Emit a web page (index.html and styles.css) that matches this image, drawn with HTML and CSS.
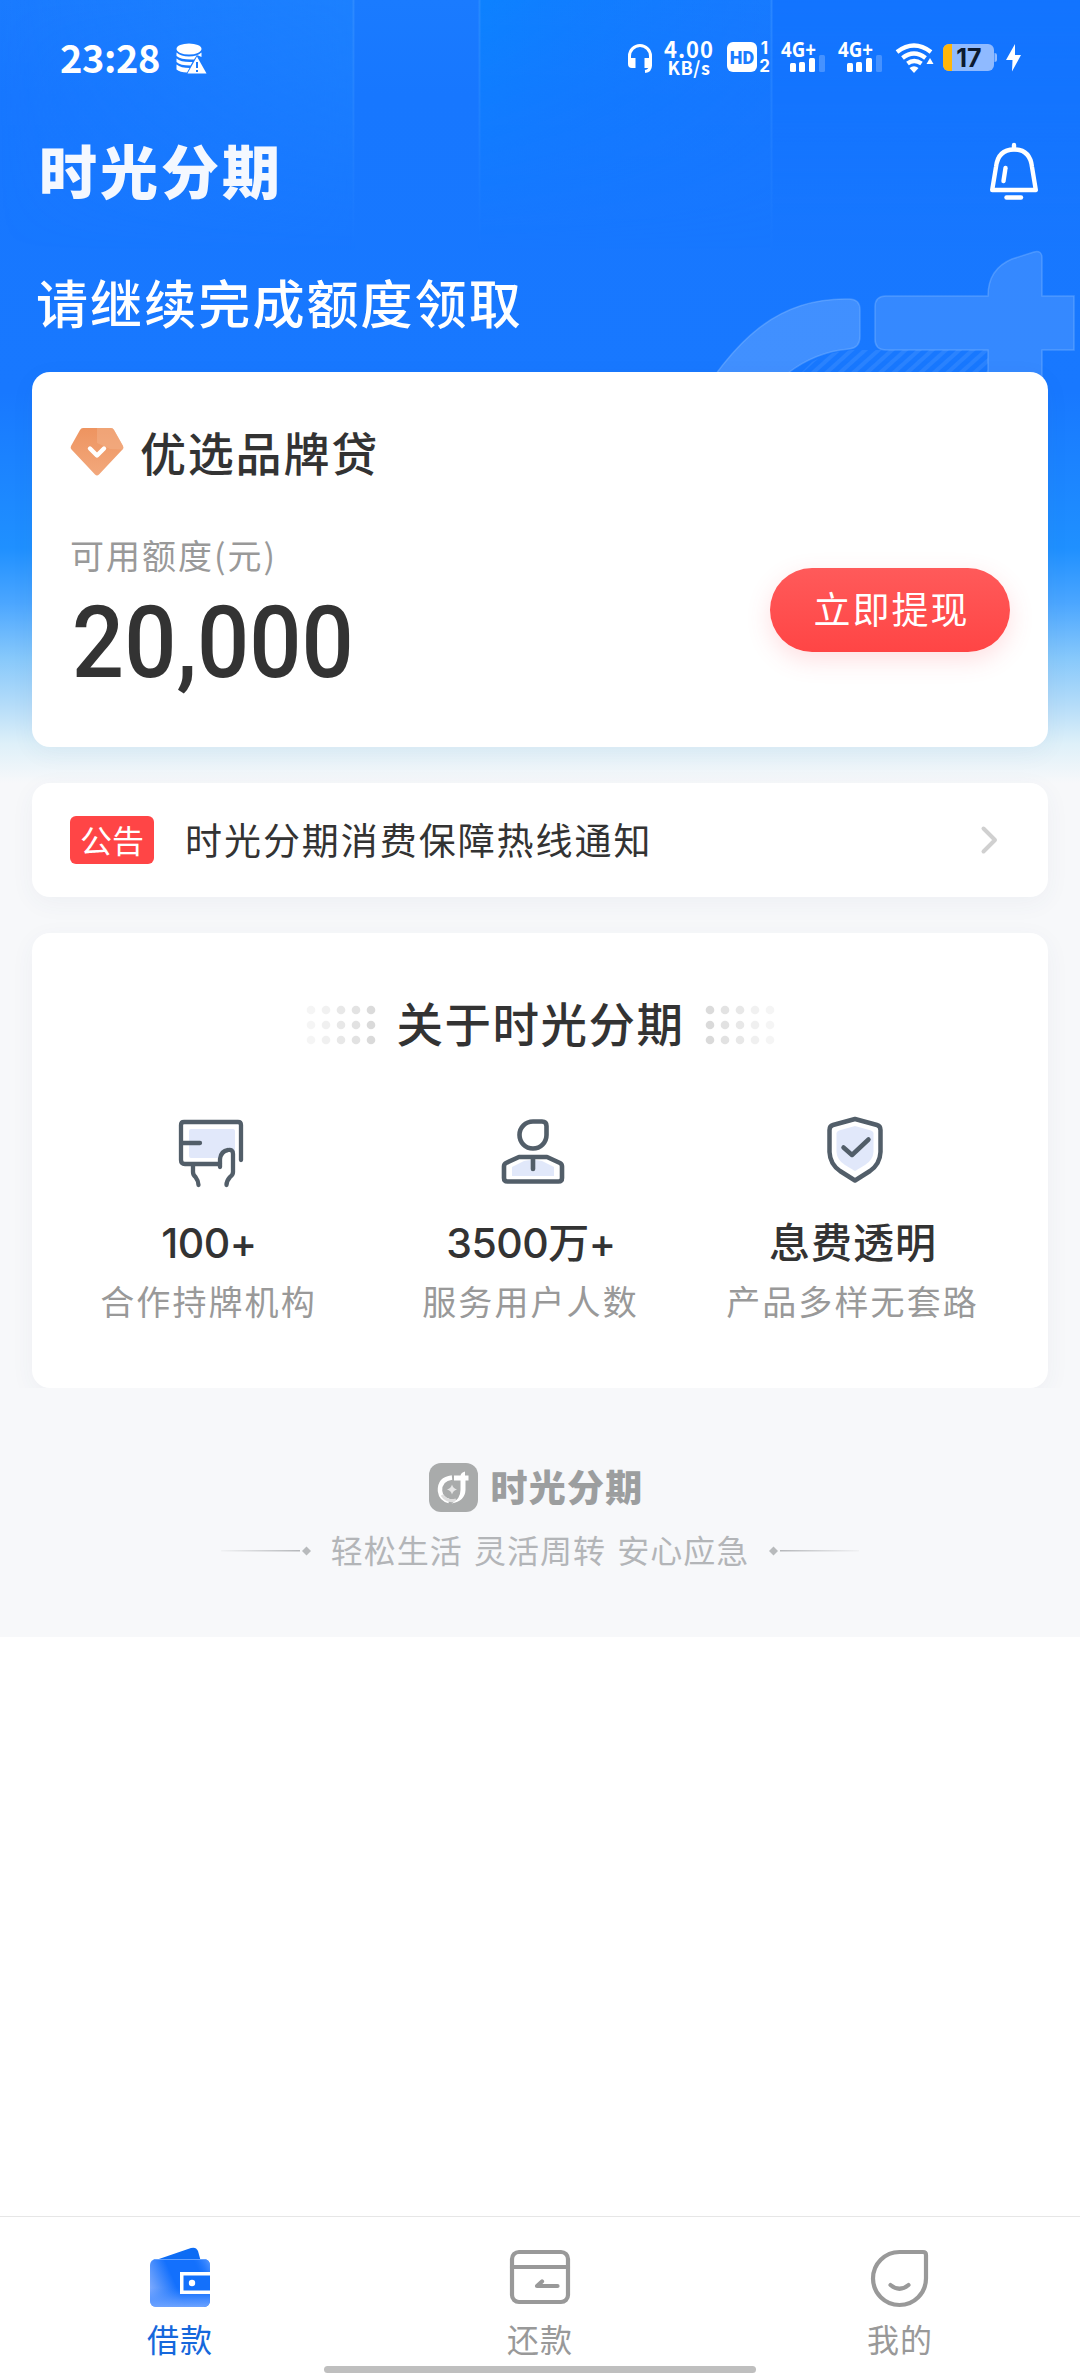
FILE: index.html
```html
<!DOCTYPE html>
<html lang="zh-CN">
<head>
<meta charset="utf-8">
<title>时光分期</title>
<link rel="stylesheet" href="styles.css">
</head>
<body>
<div class="app">
  <svg class="hero-art" viewBox="0 0 1080 783" aria-hidden="true">
    <defs>
      <linearGradient id="sky" x1="0" y1="0" x2="0" y2="1">
        <stop offset="0" stop-color="#1a7bff"/>
        <stop offset=".12" stop-color="#1777ff"/>
        <stop offset=".5" stop-color="#1878ff"/>
        <stop offset=".7" stop-color="#1f90ff"/>
        <stop offset=".77" stop-color="#4ba6ff"/>
        <stop offset=".84" stop-color="#86c8fb"/>
        <stop offset=".9" stop-color="#b4dcf9"/>
        <stop offset=".95" stop-color="#def0f9"/>
        <stop offset="1" stop-color="#f7f8fa"/>
      </linearGradient>
      <linearGradient id="beam" x1="0" y1="0" x2="1" y2="0">
        <stop offset="0" stop-color="#0784ff" stop-opacity=".7"/>
        <stop offset="1" stop-color="#0c78ff" stop-opacity=".2"/>
      </linearGradient>
      <linearGradient id="fade" x1="0" y1="0" x2="0" y2="1">
        <stop offset="0" stop-color="#fff"/>
        <stop offset="1" stop-color="#000"/>
      </linearGradient>
      <mask id="fadeMask"><rect width="1080" height="250" fill="url(#fade)"/></mask>
      <pattern id="hatch" width="9" height="9" patternUnits="userSpaceOnUse" patternTransform="rotate(48)">
        <rect width="4" height="9" fill="#fff" fill-opacity=".08"/>
      </pattern>
      <linearGradient id="edge" x1="0" y1="0" x2="1" y2="0">
        <stop offset="0" stop-color="#1c80ff" stop-opacity="0"/>
        <stop offset="1" stop-color="#1c80ff"/>
      </linearGradient>
    </defs>
    <rect width="1080" height="783" fill="url(#sky)"/>
    <g mask="url(#fadeMask)">
      <rect width="354" height="250" fill="url(#edge)"/>
      <rect x="479" width="293" height="250" fill="url(#beam)"/>
      <rect x="772" width="308" height="250" fill="#0d6fff" fill-opacity=".6"/>
      <path d="M353.500 0V250M479.500 0V250M771.500 0V250" stroke="#3d93ff" stroke-width="2" stroke-opacity=".5"/>
    </g>
    <path d="M800 374L812 362Q830 351 852 350H988V374Z" fill="url(#hatch)"/>
    <g fill="#fff" stroke="#8bc0ff" stroke-opacity=".35" stroke-width="1.500">
      <path fill-opacity=".18" d="M686 420C735 335 780 299 845 299H849Q860 299 860 310V336Q860 348 849 349C825 351 805 360 788 373L760 420Z"/>
      <path fill-opacity=".13" d="M886 296H988C988 274 1000 264 1012 259L1034 252Q1042 250 1042 258V296H1074V350H1042V420H988V350H886Q875 350 875 339V307Q875 296 886 296Z"/>
    </g>
  </svg>

  <div class="status-bar">
    <div class="status-left">
      <span class="clock">23:28</span>
      <svg width="31" height="31" viewBox="0 0 31 31" aria-hidden="true">
        <g fill="#fff">
          <ellipse cx="13" cy="6" rx="12.500" ry="5.500"/>
          <path d="M.500 9.500Q5 13.500 13 13.500T25.500 9.500V14L21 12L18 16.500Q5 17 .500 13Z"/>
          <path d="M.500 15.500Q5 19.500 16.500 19L14.500 22.500Q4 22.500 .500 19Z"/>
          <path d="M.500 21.500Q5 25 13.500 25L11 29.500Q4 29.500 .500 26.500Z"/>
          <path d="M21 13.500L30.500 30.500H11.500Z"/>
        </g>
        <path d="M21 19V25M21 27V29" stroke="#1a7bff" stroke-width="2"/>
      </svg>
    </div>
    <div class="status-right">
      <svg class="st-head" width="26" height="31" viewBox="0 0 26 31" aria-hidden="true">
        <path d="M2.500 19V13A10.500 10.500 0 0 1 23.500 13V22Q23.500 28 18 28.500" fill="none" stroke="#fff" stroke-width="3"/>
        <path d="M1 15H8.500V25H5Q1 25 1 21ZM25 15H17.500V25H21Q25 25 25 21Z" fill="#fff"/>
      </svg>
      <div class="speed"><span class="speed-num">4.00</span><span class="speed-unit">KB/s</span></div>
      <svg class="st-hd" width="44" height="32" viewBox="0 0 44 32">
        <rect x="1" y="0" width="30" height="30" rx="6" fill="#fff"/>
        <text x="16" y="22" text-anchor="middle" class="hd-text">HD</text>
        <text x="38.500" y="12" text-anchor="middle" class="hd-num">1</text>
        <text x="38.500" y="29.500" text-anchor="middle" class="hd-num">2</text>
      </svg>
      <svg class="st-sig" width="45" height="32" viewBox="0 0 45 32">
        <text x="0" y="15" class="net" textLength="35" lengthAdjust="spacingAndGlyphs">4G+</text>
        <g fill="#fff"><rect x="9" y="21" width="6" height="9" rx="1.500"/><rect x="18" y="20" width="6" height="10" rx="1.500"/><rect x="28" y="16" width="6" height="14" rx="1.500"/><rect x="38" y="13" width="6" height="17" rx="1.500" opacity=".22"/></g>
      </svg>
      <svg class="st-sig2" width="45" height="32" viewBox="0 0 45 32">
        <text x="0" y="15" class="net" textLength="35" lengthAdjust="spacingAndGlyphs">4G+</text>
        <g fill="#fff"><rect x="9" y="21" width="6" height="9" rx="1.500"/><rect x="18" y="20" width="6" height="10" rx="1.500"/><rect x="28" y="16" width="6" height="14" rx="1.500"/><rect x="38" y="13" width="6" height="17" rx="1.500" opacity=".22"/></g>
      </svg>
      <svg class="st-wifi" width="39" height="32" viewBox="0 0 39 32" aria-hidden="true">
        <g fill="none" stroke="#fff" stroke-width="4.400">
          <path d="M2 10Q19 -3 36 10"/><path d="M7.500 16Q19 7 30.500 16"/><path d="M12.500 21.500Q19 16.500 26.500 21.500"/>
        </g>
        <path d="M14.500 26Q19 22.500 23.500 26L19 31Z" fill="#fff"/>
        <path d="M35 16L38.500 22H31.500Z" fill="#fff"/>
      </svg>
      <svg class="st-bat" width="54" height="28" viewBox="0 0 54 28">
        <clipPath id="batClip"><rect width="51" height="27" rx="6"/></clipPath>
        <rect width="51" height="27" rx="6" fill="#8fbaff"/>
        <rect width="9" height="27" fill="#ffb60a" clip-path="url(#batClip)"/>
        <path d="M51.500 9Q54 9 54 11V16Q54 18 51.500 18Z" fill="#8fbaff"/>
        <text x="26" y="22.500" text-anchor="middle" class="bat-num">17</text>
      </svg>
      <svg class="st-bolt" width="15" height="28" viewBox="0 0 15 28" aria-hidden="true"><path d="M9 0L0 16H6.500L6 27.500L15 11H9Z" fill="#fff"/></svg>
    </div>
  </div>

  <header class="nav">
    <div class="brand">时光分期</div>
    <svg width="50" height="60" viewBox="0 0 50 60" aria-hidden="true">
      <g fill="none" stroke="#fff" stroke-width="4.400" stroke-linecap="round" stroke-linejoin="round">
        <path d="M25 3V7"/>
        <path d="M3.200 48L7 25Q9 7.500 25 7.500T43 25L46.800 48Z"/>
        <path d="M16.500 26L14.500 39"/>
        <path d="M17.500 55.500H32"/>
      </g>
    </svg>
  </header>

  <h1 class="headline">请继续完成额度领取</h1>

  <main class="cards">
    <section class="card loan">
      <div class="loan-title">
        <svg width="54" height="50" viewBox="0 0 54 50" aria-hidden="true">
          <defs><linearGradient id="gem" x1="0" y1="0" x2="0" y2="1"><stop offset="0" stop-color="#ee9460"/><stop offset="1" stop-color="#f2a87c"/></linearGradient></defs>
          <path d="M13 1H41Q43 1 44 3L53 19Q54 21 52.500 22.500L29 47.500Q27 49.500 25 47.500L1.500 22.500Q0 21 1 19L10 3Q11 1 13 1Z" fill="url(#gem)"/>
          <path d="M27 1H41Q43 1 44 3L53 19Q54 21 52.500 22.500L40 22L27 16Z" fill="#f3b189" opacity=".55"/>
          <path d="M20 21.500L27 28.500L34 21.500" fill="none" stroke="#fff" stroke-width="4.400" stroke-linecap="round" stroke-linejoin="round"/>
        </svg>
        <span>优选品牌贷</span>
      </div>
      <div class="loan-body">
        <div class="amount">
          <div class="amount-label">可用额度(元)</div>
          <div class="amount-value">20,000</div>
        </div>
        <button class="cta" type="button">立即提现</button>
      </div>
    </section>

    <section class="card notice">
      <span class="badge">公告</span>
      <span class="notice-text">时光分期消费保障热线通知</span>
      <svg width="17" height="28" viewBox="0 0 17 28" aria-hidden="true"><path d="M2.500 2.500L14 14L2.500 25.500" fill="none" stroke="#d0d0d0" stroke-width="4" stroke-linecap="round" stroke-linejoin="round"/></svg>
    </section>

    <section class="card about">
      <div class="about-title">
        <svg class="dots" width="70" height="40" viewBox="0 0 70 40" aria-hidden="true">
          <g fill="#d9d9d9" id="dotGrid">
            <g opacity=".25"><circle cx="5" cy="5" r="4.300"/><circle cx="5" cy="20" r="4.300"/><circle cx="5" cy="35" r="4.300"/></g>
            <g opacity=".38"><circle cx="20" cy="5" r="4.300"/><circle cx="20" cy="20" r="4.300"/><circle cx="20" cy="35" r="4.300"/></g>
            <g opacity=".6"><circle cx="35" cy="5" r="4.300"/><circle cx="35" cy="20" r="4.300"/><circle cx="35" cy="35" r="4.300"/></g>
            <g opacity=".75"><circle cx="50" cy="5" r="4.300"/><circle cx="50" cy="20" r="4.300"/><circle cx="50" cy="35" r="4.300"/></g>
            <g opacity=".95"><circle cx="65" cy="5" r="4.300"/><circle cx="65" cy="20" r="4.300"/><circle cx="65" cy="35" r="4.300"/></g>
          </g>
        </svg>
        <h2>关于时光分期</h2>
        <svg class="dots" width="70" height="40" viewBox="0 0 70 40" aria-hidden="true"><use href="#dotGrid" transform="translate(70 0) scale(-1 1)"/></svg>
      </div>
      <div class="stats">
        <div class="stat">
          <svg width="72" height="72" viewBox="0 0 72 72" aria-hidden="true">
            <path d="M16 14H58Q60 14 60 16V38L52 33Q46 34 44 43H16Q14 43 14 41V16Q14 14 16 14Z" fill="#e1e8fa"/>
            <g fill="none" stroke="#525e69" stroke-width="4.300" stroke-linecap="round" stroke-linejoin="round">
              <path d="M66 45V10Q66 7 63 7H9Q6 7 6 10V45Q6 49 10 49H45"/>
              <path d="M7 28H25"/>
              <path d="M45 52V44Q46 36 53 35Q58 34 58 39V57Q58 60 55 62Q51.500 66 51.500 70"/>
              <path d="M18 50V57Q18 60 20.500 62Q23.500 66 23.500 70"/>
            </g>
          </svg>
          <div class="stat-value">100+</div>
          <div class="stat-label">合作持牌机构</div>
        </div>
        <div class="stat">
          <svg width="72" height="72" viewBox="0 0 72 72" aria-hidden="true">
            <path d="M15 52L27 46Q36 44 45 46L57 52V61H15Z" fill="#e1e8fa"/>
            <g fill="none" stroke="#525e69" stroke-width="4.600" stroke-linecap="round" stroke-linejoin="round">
              <path d="M36 6.500H45Q49.500 6.500 49.500 11V20A13.500 13.500 0 1 1 36 6.500Z"/>
              <path d="M22 42H50L63 48Q65 49 65 51.500V63Q65 66.500 61.500 66.500H10.500Q7 66.500 7 63V51.500Q7 49 9 48Z"/>
              <path d="M36 43V54"/>
            </g>
          </svg>
          <div class="stat-value">3500万+</div>
          <div class="stat-label">服务用户人数</div>
        </div>
        <div class="stat">
          <svg width="72" height="72" viewBox="0 0 72 72" aria-hidden="true">
            <path d="M36 11L52 15.500Q54.500 16.500 54.500 18V37Q54 45 46 50L36 56L26 50Q18 45 17.500 37V18Q17.500 16.500 20 15.500Z" fill="#e1e8fa"/>
            <g fill="none" stroke="#525e69" stroke-width="4.500" stroke-linecap="round" stroke-linejoin="round">
              <path d="M36 4L58 10Q61.500 11 61.500 15V37Q61 49 51 56L36 65.500L21 56Q11 49 10.500 37V15Q10.500 11 14 10Z"/>
              <path d="M24.500 32.500L33 40L49.500 24.500"/>
            </g>
          </svg>
          <div class="stat-value stat-words">息费透明</div>
          <div class="stat-label">产品多样无套路</div>
        </div>
      </div>
    </section>
  </main>

  <footer class="foot">
    <div class="foot-brand">
      <svg width="49" height="49" viewBox="0 0 49 49" aria-hidden="true">
        <rect width="49" height="49" rx="12" fill="#a9abab"/>
        <path d="M23 14.500Q10.500 16 11 28Q12 36 20 38" fill="none" stroke="#fff" stroke-width="4.500"/>
        <path d="M13 32Q18 39.500 27 37" fill="none" stroke="#dedede" stroke-width="3"/>
        <path d="M25 12.500H31.500Q32 9.500 36 8.500V12.500H39.500V17.500H36.500V27Q36 38 22.500 40.500Q31.500 36 31.500 27V17.500H25Z" fill="#fff"/>
        <path d="M23 21.500Q24 25.500 28 26.500Q24 27.500 23 31.500Q22 27.500 18 26.500Q22 25.500 23 21.500Z" fill="#e6e6e6"/>
      </svg>
      <span>时光分期</span>
    </div>
    <div class="tagline">
      <svg width="90" height="10" viewBox="0 0 90 10" aria-hidden="true">
        <defs><linearGradient id="tail"><stop offset="0" stop-color="#b5b7ba" stop-opacity=".1"/><stop offset="1" stop-color="#b5b7ba"/></linearGradient></defs>
        <g id="ornament"><rect y="4" width="79" height="1.500" fill="url(#tail)"/><path d="M85.500 .500L90 5L85.500 9.500L81 5Z" fill="#b8babc"/></g>
      </svg>
      <span>轻松生活 灵活周转 安心应急</span>
      <svg width="90" height="10" viewBox="0 0 90 10" aria-hidden="true"><use href="#ornament" transform="translate(90 0) scale(-1 1)"/></svg>
    </div>
  </footer>

  <div class="filler"></div>

  <nav class="tabs">
    <a class="tab active">
      <svg width="62" height="62" viewBox="0 0 62 62" aria-hidden="true">
        <defs>
          <linearGradient id="w1" x1="0" y1=".65" x2=".42" y2=".5"><stop offset="0" stop-color="#7fabff"/><stop offset=".35" stop-color="#5a97fc"/><stop offset="1" stop-color="#1370fd"/></linearGradient>
          <linearGradient id="w2" x1="0" y1="1" x2="0" y2="0"><stop offset="0" stop-color="#6da3ff"/><stop offset=".15" stop-color="#5394ff" stop-opacity=".8"/><stop offset=".4" stop-color="#2b7fff" stop-opacity="0"/></linearGradient>
          <linearGradient id="w3" x1="1" y1="0" x2=".75" y2=".1"><stop offset="0" stop-color="#5d9bff"/><stop offset="1" stop-color="#2b7fff" stop-opacity="0"/></linearGradient>
        </defs>
        <path d="M7 14L42 2Q47 .500 49 5L52 16H7Z" fill="#0d6cf4"/>
        <g><rect x="1" y="13" width="60" height="48" rx="6" fill="url(#w1)"/><rect x="1" y="13" width="60" height="48" rx="6" fill="url(#w2)"/><rect x="1" y="13" width="60" height="48" rx="6" fill="url(#w3)"/></g>
        <path d="M5 13.500H57" stroke="#62a0ff" stroke-width="1"/>
        <rect x="31" y="26" width="31" height="22" fill="#fff"/>
        <rect x="34.500" y="29.500" width="26.500" height="15" fill="#1370fb"/>
        <circle cx="43" cy="37" r="3.200" fill="#fff"/>
      </svg>
      <span>借款</span>
    </a>
    <a class="tab">
      <svg width="62" height="62" viewBox="0 0 62 62" aria-hidden="true">
        <g fill="none" stroke="#999" stroke-width="4.200" stroke-linecap="round" stroke-linejoin="round">
          <rect x="3" y="6" width="56" height="50" rx="7"/><path d="M3 21H59"/><path d="M48.500 40H28L33 35.500"/>
        </g>
      </svg>
      <span>还款</span>
    </a>
    <a class="tab">
      <svg width="62" height="62" viewBox="0 0 62 62" aria-hidden="true">
        <g fill="none" stroke="#999" stroke-width="4.200" stroke-linecap="round" stroke-linejoin="round">
          <path d="M30.500 6H54Q57 6 57 9V32.500A26.500 26.500 0 1 1 30.500 6Z"/><path d="M21.500 39Q30.500 46.500 39.500 39"/>
        </g>
      </svg>
      <span>我的</span>
    </a>
    <div class="home-indicator"></div>
  </nav>
</div>
</body>
</html>
```
FILE: styles.css
```css
* { box-sizing: border-box; }

body {
  margin: 0;
  background: #fff;
  color: #333;
  font-family: "Noto Sans CJK SC", "Noto Sans", sans-serif;
}

svg { display: block; flex: none; overflow: visible; }

.app {
  position: relative;
  display: flex;
  flex-direction: column;
  width: 1080px;
  height: 2376px;
  overflow: hidden;
  background: linear-gradient(#f7f8fa 1400px, #fff 1400px);
}

.hero-art {
  position: absolute;
  inset: 0 0 auto 0;
  width: 1080px;
  height: 783px;
  overflow: hidden;
}

.app > :not(.hero-art) { position: relative; }

/* status bar */
.status-bar {
  display: flex;
  justify-content: space-between;
  align-items: center;
  height: 116px;
  padding: 0 59px 0 60px;
  color: #fff;
}
.status-left { display: flex; align-items: center; gap: 16px; }
.clock {
  padding-bottom: 2px;
  font-size: 38px;
  font-weight: 700;
  line-height: 40px;
  letter-spacing: -.4px;
}
.status-right { display: flex; align-items: center; }
.speed {
  display: flex;
  flex-direction: column;
  align-items: center;
  width: 52px;
  margin: 0 11px 0 10px;
  padding-bottom: 3px;
  font-family: "Noto Sans CJK SC", sans-serif;
  font-weight: 700;
  white-space: nowrap;
}
.speed-num { font-size: 22px; line-height: 20px; letter-spacing: 1px; }
.speed-unit { font-size: 18px; line-height: 18px; letter-spacing: .6px; }
.hd-text { font: 900 18px "Roboto", sans-serif; fill: #1a7bff; }
.hd-num { font: 700 17px "Inter", sans-serif; fill: #fff; }
.net { font: 700 21px "Noto Sans", sans-serif; fill: #fff; }
.bat-num { font: 700 25px "Inter", sans-serif; fill: #0b1a30; }
.st-sig { margin-left: 11px; }
.st-sig2 { margin-left: 12px; }
.st-wifi { margin-left: 12px; }
.st-bat { margin-left: 9px; }
.st-bolt { margin-left: 9px; }

/* brand row */
.nav {
  display: flex;
  justify-content: space-between;
  align-items: center;
  height: 112px;
  padding: 0 41px 0 39px;
  color: #f4f8ff;
}
.brand {
  padding-bottom: 6px;
  font-size: 58px;
  font-weight: 900;
  line-height: 60px;
  letter-spacing: 3px;
}

.headline {
  height: 144px;
  margin: 0;
  padding: 38px 0 0 36px;
  color: #fff;
  font-size: 52px;
  font-weight: 500;
  line-height: 72px;
  letter-spacing: 2.1px;
}

/* cards */
.cards {
  display: flex;
  flex-direction: column;
  gap: 36px;
  padding: 0 32px;
}
.card {
  border-radius: 18px;
  background: #fff;
  box-shadow: 0 6px 24px rgba(60, 80, 110, .05);
}

.loan { height: 375px; padding: 48px 38px 0; }
.loan-title {
  display: flex;
  align-items: center;
  gap: 16px;
  height: 64px;
  font-size: 46px;
  font-weight: 500;
  line-height: 62px;
  letter-spacing: 1.8px;
}
.loan-title span { padding-bottom: 2px; }
.loan-body { display: flex; justify-content: space-between; }
.amount { padding-top: 41px; }
.amount-label {
  color: #999;
  font-size: 34px;
  line-height: 60px;
  letter-spacing: 2px;
}
.amount-value {
  width: 300px;
  margin-top: 8px;
  padding-left: 2px;
  font-family: "Roboto", sans-serif;
  font-size: 100px;
  font-weight: 500;
  line-height: 100px;
  transform: scaleX(.92);
  transform-origin: 0 0;
}
.cta {
  width: 240px;
  height: 84px;
  margin-top: 84px;
  padding: 0 0 4px 3px;
  border: 0;
  border-radius: 42px;
  background: linear-gradient(#ff5a5a, #ff4545);
  box-shadow: 0 8px 24px rgba(255, 80, 90, .18);
  color: #fff;
  font-family: inherit;
  font-size: 37px;
  letter-spacing: 2px;
}

.notice {
  display: flex;
  align-items: center;
  height: 114px;
  padding: 0 50px 0 38px;
}
.badge {
  width: 84px;
  height: 48px;
  border-radius: 6px;
  background: #ff4546;
  color: #fff;
  font-size: 32px;
  line-height: 47px;
  text-align: center;
}
.notice-text {
  flex: 1;
  padding: 0 0 2px 31px;
  font-size: 37px;
  line-height: 50px;
  letter-spacing: 1.950px;
}

.about { height: 455px; padding-top: 62px; }
.about-title {
  display: flex;
  justify-content: center;
  align-items: center;
  gap: 20px;
  height: 60px;
}
.about-title h2 {
  margin: 0;
  padding: 0 0 7px 1px;
  font-size: 46.500px;
  font-weight: 500;
  line-height: 54px;
  letter-spacing: 1.500px;
}
.stats {
  display: grid;
  grid-template-columns: repeat(3, 1fr);
  padding: 60px 35px 0 15px;
}
.stat { display: flex; flex-direction: column; align-items: center; white-space: nowrap; }
.stat svg { margin-left: 5px; }
.stat-value {
  margin-top: 24px;
  padding-left: 2px;
  font-family: "Inter", "Noto Sans CJK SC", sans-serif;
  font-size: 41px;
  font-weight: 500;
  line-height: 64px;
  letter-spacing: -.5px;
}
.stat-words { letter-spacing: 1px; }
.stat-label {
  padding-left: 1px;
  color: #999;
  font-size: 34px;
  line-height: 52px;
  letter-spacing: 2.100px;
}

/* footer */
.foot {
  height: 249px;
  padding-top: 75px;
  background: #f7f8fa;
}
.foot-brand {
  display: flex;
  justify-content: center;
  align-items: center;
  gap: 12px;
  height: 49px;
  padding-right: 7px;
  color: #9c9e9f;
  font-size: 37px;
  font-weight: 900;
  line-height: 44px;
  letter-spacing: 1.300px;
}
.foot-brand span { padding-bottom: 4px; }
.tagline {
  display: flex;
  justify-content: center;
  align-items: center;
  gap: 20px;
  margin-top: 15px;
  color: #b3b5b8;
  font-size: 32px;
  line-height: 44px;
}
.tagline span { padding-bottom: 3px; letter-spacing: 1px; word-spacing: 3px; }

.filler { flex: 1; background: #fff; }

/* tab bar */
.tabs {
  display: grid;
  grid-template-columns: repeat(3, 1fr);
  height: 160px;
  border-top: 1px solid #e6e6e6;
  background: #fff;
}
.tab {
  display: flex;
  flex-direction: column;
  align-items: center;
  padding-top: 29px;
  color: #999;
  font-size: 32px;
  line-height: 40px;
}
.tab span { margin-top: 10px; letter-spacing: 1px; }
.tab.active { color: #1668dc; }
.home-indicator {
  position: absolute;
  left: 324px;
  bottom: 3px;
  width: 432px;
  height: 7px;
  border-radius: 4px;
  background: #bfbfbf;
}
```
